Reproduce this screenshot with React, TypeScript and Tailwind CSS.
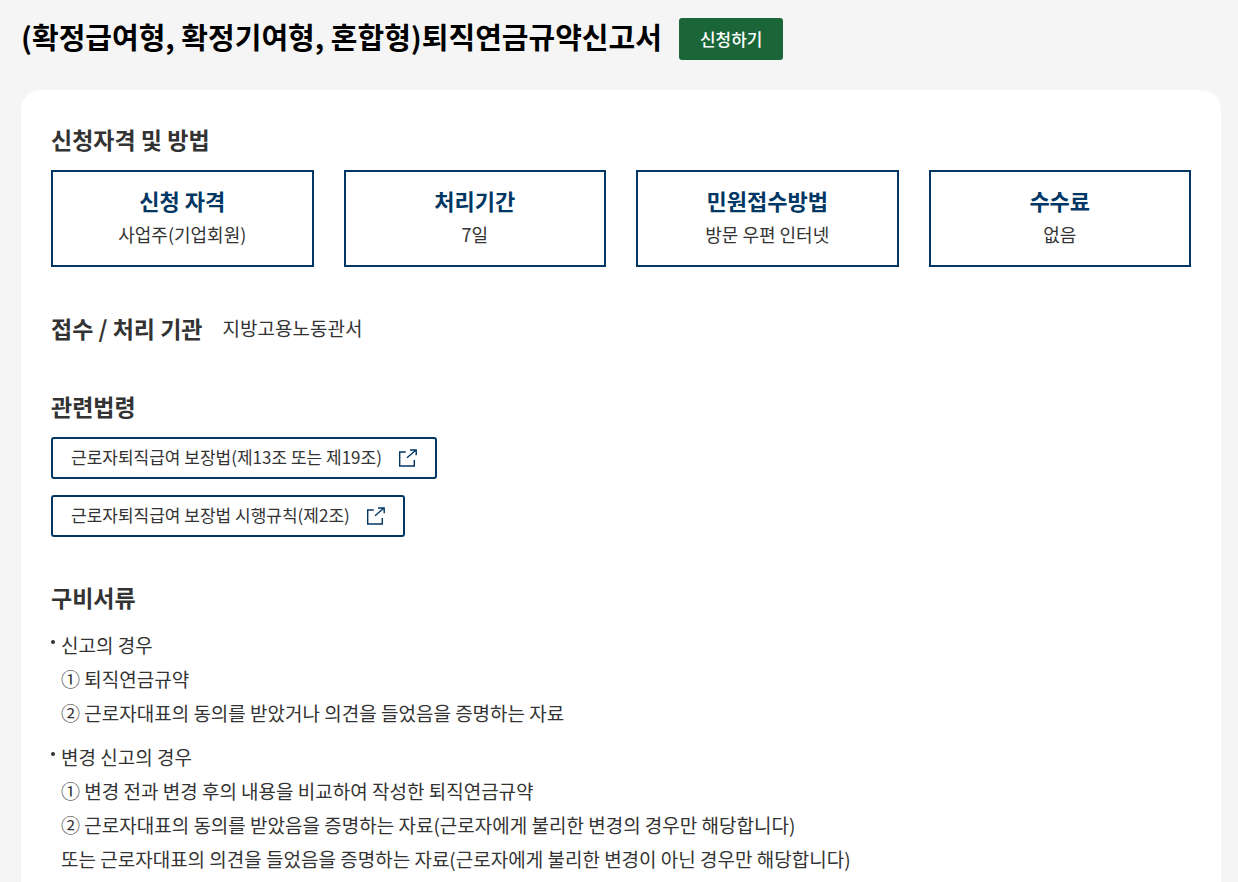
import type { ReactNode } from 'react';

interface InfoItem {
  title: string;
  text: string;
}

interface DocumentGroup {
  title: string;
  lines: string[];
}

const infoItems: InfoItem[] = [
  { title: '신청 자격', text: '사업주(기업회원)' },
  { title: '처리기간', text: '7일' },
  { title: '민원접수방법', text: '방문 우편 인터넷' },
  { title: '수수료', text: '없음' },
];

const laws: string[] = [
  '근로자퇴직급여 보장법(제13조 또는 제19조)',
  '근로자퇴직급여 보장법 시행규칙(제2조)',
];

const documents: DocumentGroup[] = [
  {
    title: '신고의 경우',
    lines: [
      '① 퇴직연금규약',
      '② 근로자대표의 동의를 받았거나 의견을 들었음을 증명하는 자료',
    ],
  },
  {
    title: '변경 신고의 경우',
    lines: [
      '① 변경 전과 변경 후의 내용을 비교하여 작성한 퇴직연금규약',
      '② 근로자대표의 동의를 받았음을 증명하는 자료(근로자에게 불리한 변경의 경우만 해당합니다)',
      '또는 근로자대표의 의견을 들었음을 증명하는 자료(근로자에게 불리한 변경이 아닌 경우만 해당합니다)',
    ],
  },
];

const SectionTitle = ({ children }: { children: ReactNode }) => (
  <h2 className="text-[23px] leading-[34px] font-bold">{children}</h2>
);

const NewWindowIcon = () => (
  <svg
    width="20"
    height="20"
    viewBox="0 0 20 20"
    fill="none"
    stroke="#003764"
    strokeWidth="1.4"
    aria-hidden="true"
  >
    <path d="M8.7 4H2.7V18H17.3V12" />
    <path d="M10 9.8L19 2M13 2H19.2V7.2" />
  </svg>
);

const InfoCard = ({ title, text }: InfoItem) => (
  <li className="border-2 border-[#003764] px-4 pt-3 pb-4 text-center">
    <h3 className="text-[22px] leading-[32px] font-bold text-[#003764]">{title}</h3>
    <p className="mt-1 text-[18px] leading-[29px]">{text}</p>
  </li>
);

const App = () => {
  return (
    <div className="min-h-screen bg-[#f5f5f5] pt-[18px] pr-[17px] pl-[21px] font-['Noto_Sans_CJK_KR','Noto_Sans',sans-serif] text-[#333]">
      <header className="flex flex-wrap items-start gap-[17px]">
        <h1 className="text-[29px] leading-[36px] font-bold text-black">
          (확정급여형, 확정기여형, 혼합형)퇴직연금규약신고서
        </h1>
        <button
          type="button"
          className="h-[42px] rounded-[3px] bg-[#1a6638] px-[21px] text-[17px] font-medium text-white"
        >
          신청하기
        </button>
      </header>

      <main className="mt-[30px] min-h-screen rounded-t-[20px] bg-white px-[30px] pt-8 pb-10">
        <section>
          <SectionTitle>신청자격 및 방법</SectionTitle>
          <ul className="mt-[14px] grid grid-cols-2 gap-[30px] md:grid-cols-4">
            {infoItems.map((item) => (
              <InfoCard key={item.title} {...item} />
            ))}
          </ul>
        </section>

        <section className="mt-[43px] flex items-center gap-5">
          <SectionTitle>접수 / 처리 기관</SectionTitle>
          <p className="text-[19px] leading-[36px]">지방고용노동관서</p>
        </section>

        <section className="mt-[43px]">
          <SectionTitle>관련법령</SectionTitle>
          <ul className="mt-[14px] flex flex-col items-start gap-4">
            {laws.map((law) => (
              <li key={law}>
                <a
                  href="#"
                  className="flex h-[42px] items-center gap-[15px] rounded-[3px] border-2 border-[#003764] px-[18px] text-[17px]"
                >
                  <span className="pb-[2px]">{law}</span>
                  <NewWindowIcon />
                </a>
              </li>
            ))}
          </ul>
        </section>

        <section className="mt-[43px]">
          <SectionTitle>구비서류</SectionTitle>
          <ul className="mt-[14px] flex flex-col gap-[10px] text-[19px] leading-[34px]">
            {documents.map((group) => (
              <li key={group.title} className="flex gap-[6px]">
                <span className="mt-3 size-1 shrink-0 rounded-full bg-[#333]" />
                <div>
                  <p>{group.title}</p>
                  {group.lines.map((line) => (
                    <p key={line}>{line}</p>
                  ))}
                </div>
              </li>
            ))}
          </ul>
        </section>
      </main>
    </div>
  );
};

export default App;
